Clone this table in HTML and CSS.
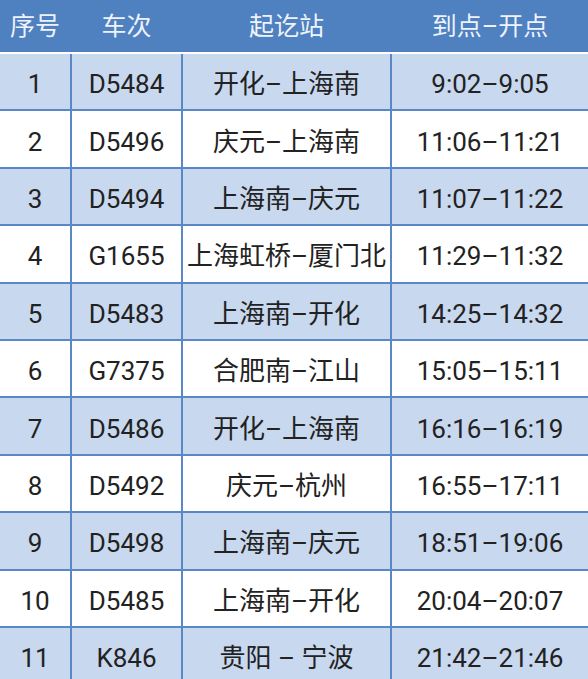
FILE: index.html
```html
<!DOCTYPE html>
<html lang="zh-CN">
<head>
<meta charset="utf-8">
<link rel="stylesheet" href="styles.css">
</head>
<body>
<div class="sheet">
  <div class="head">
    <div class="hcell">序号</div>
    <div class="hcell">车次</div>
    <div class="hcell">起讫站</div>
    <div class="hcell">到点–开点</div>
  </div>
  <div class="grid">
    <div class="cell odd">1</div><div class="cell odd">D5484</div><div class="cell odd">开化–上海南</div><div class="cell odd">9:02–9:05</div>
    <div class="cell">2</div><div class="cell">D5496</div><div class="cell">庆元–上海南</div><div class="cell">11:06–11:21</div>
    <div class="cell odd">3</div><div class="cell odd">D5494</div><div class="cell odd">上海南–庆元</div><div class="cell odd">11:07–11:22</div>
    <div class="cell">4</div><div class="cell">G1655</div><div class="cell">上海虹桥–厦门北</div><div class="cell">11:29–11:32</div>
    <div class="cell odd">5</div><div class="cell odd">D5483</div><div class="cell odd">上海南–开化</div><div class="cell odd">14:25–14:32</div>
    <div class="cell">6</div><div class="cell">G7375</div><div class="cell">合肥南–江山</div><div class="cell">15:05–15:11</div>
    <div class="cell odd">7</div><div class="cell odd">D5486</div><div class="cell odd">开化–上海南</div><div class="cell odd">16:16–16:19</div>
    <div class="cell">8</div><div class="cell">D5492</div><div class="cell">庆元–杭州</div><div class="cell">16:55–17:11</div>
    <div class="cell odd">9</div><div class="cell odd">D5498</div><div class="cell odd">上海南–庆元</div><div class="cell odd">18:51–19:06</div>
    <div class="cell">10</div><div class="cell">D5485</div><div class="cell">上海南–开化</div><div class="cell">20:04–20:07</div>
    <div class="cell odd">11</div><div class="cell odd">K846</div><div class="cell odd">贵阳 – 宁波</div><div class="cell odd">21:42–21:46</div>
  </div>
</div>
</body>
</html>
```
FILE: styles.css
```css
html, body {
  margin: 0;
  padding: 0;
  background: #ffffff;
}
body {
  width: 588px;
  height: 679px;
  overflow: hidden;
  font-family: Roboto, "Noto Sans CJK SC", sans-serif;
}
.sheet {
  width: 588px;
}
.head {
  display: grid;
  grid-template-columns: 70px 109px 207px 196px;
  column-gap: 2px;
  height: 52px;
  background: #4f80bf;
  margin-bottom: 2px;
}
.hcell {
  display: flex;
  align-items: center;
  justify-content: center;
  color: #eef3fb;
  font-size: 25px;
  line-height: 1;
  padding-top: 1px;
}
.grid {
  display: grid;
  grid-template-columns: 70px 109px 207px 196px;
  grid-auto-rows: 55.4px;
  gap: 2px;
  background: #5a88c6;
}
.cell {
  display: flex;
  align-items: center;
  justify-content: center;
  background: #ffffff;
  color: #222222;
  font-size: 26px;
  line-height: 1;
  white-space: nowrap;
  padding-top: 5px;
}
.cell.odd {
  background: #c8d8ef;
}
```
